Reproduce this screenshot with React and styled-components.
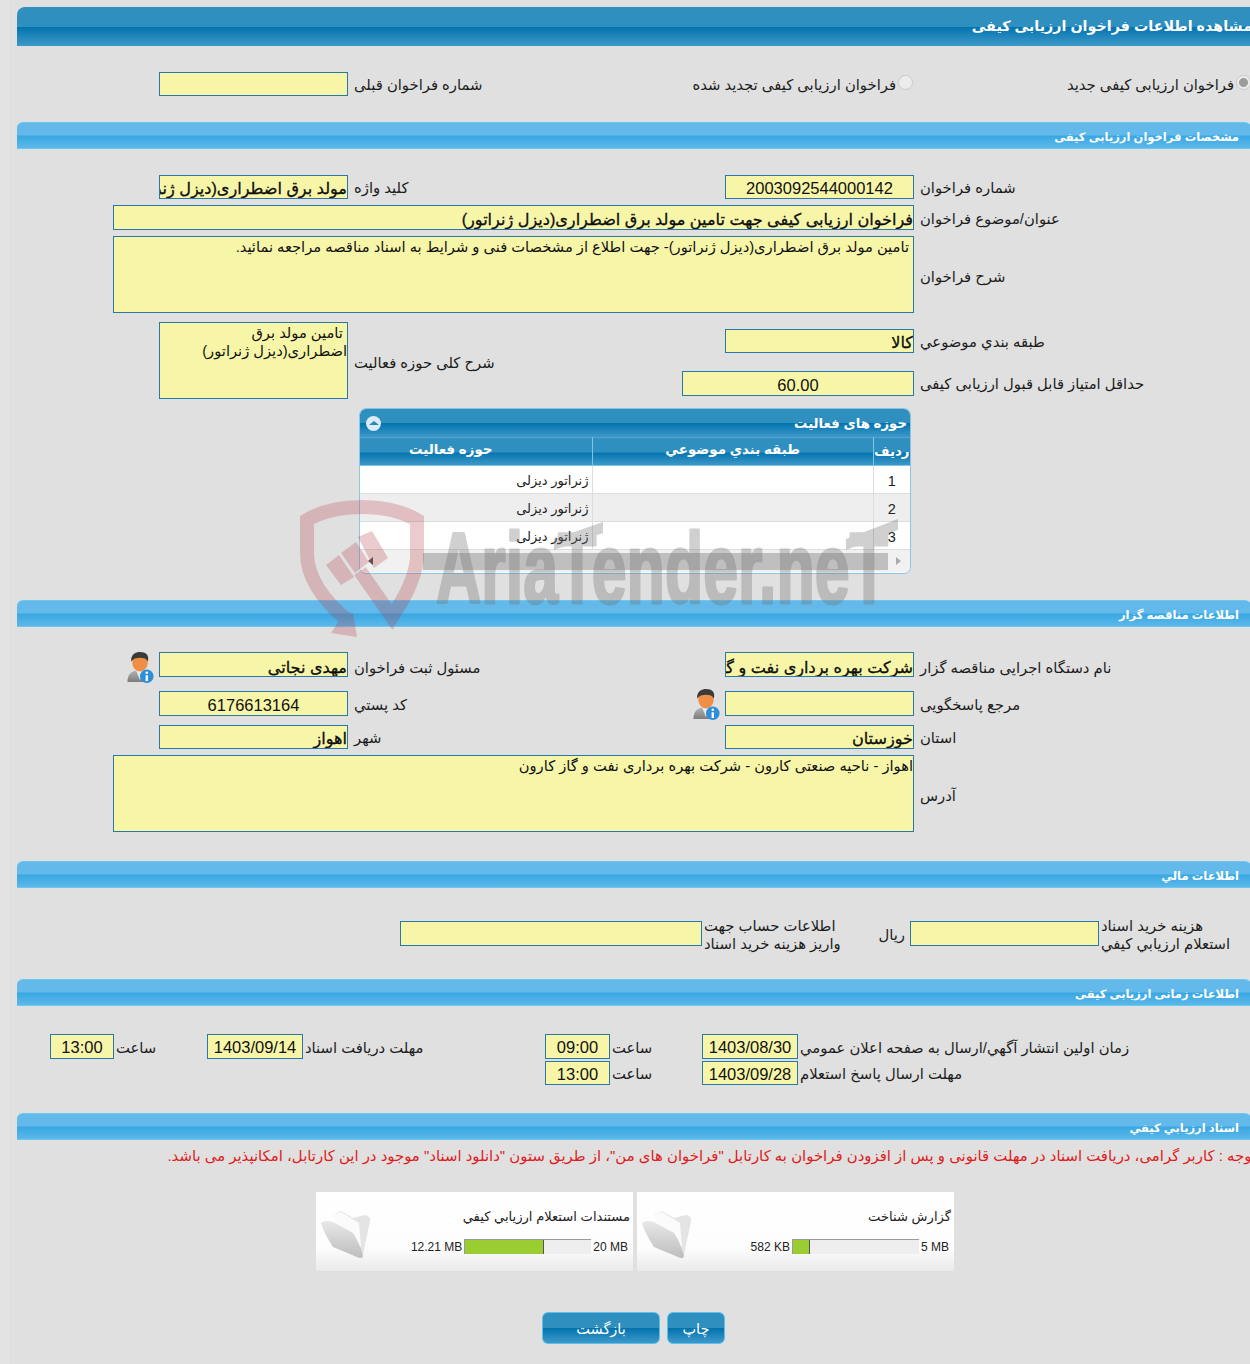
import React from "react";
import styled, { createGlobalStyle } from "styled-components";

const GlobalStyle = createGlobalStyle`
	html, body {
		margin: 0;
		padding: 0;
		height: 1364px;
		overflow: hidden;
		background: #e3e3e3;
	}
	body {
		font-family: "Liberation Sans", "DejaVu Sans", sans-serif;
		color: #1c1c1c;
	}
`;

const darkBar = "linear-gradient(to bottom, #2f90bf 0%, #2f90bf 50%, #0273ae 51%, #3f99c9 100%)";
const lightBar = "linear-gradient(to bottom, #62b9ea 0%, #62b9ea 49%, #38a7e2 51%, #5cb8ea 100%)";

const formCols = "96px 46px 189px 6px 371px 189px 6px 331px";
const moneyCols = "383px 302px 2px 177px 24px 5px 189px 2px 150px";
const timeCols = "33px 64px 2px 91px 96px 2px 240px 65px 2px 90px 96px 2px 451px";

const Page = styled.div`
	position: relative;
	width: 1241px;
	height: 1364px;
	margin-left: 10px;
	padding-left: 6px;
	padding-top: 7px;
	box-sizing: border-box;
	background: #e0e0e0;
	border-left: 1px solid #dcdcdc;
`;

const TitleBar = styled.div`
	width: 1235px;
	height: 39px;
	line-height: 39px;
	direction: rtl;
	white-space: nowrap;
	font-size: 14.3px;
	font-weight: bold;
	color: #fff;
	background: ${darkBar};
	border-top-left-radius: 8px;
`;

const SectionBar = styled.div`
	width: 1234px;
	height: 27px;
	margin-top: ${(p) => p.$mt}px;
	padding-right: 12px;
	box-sizing: border-box;
	line-height: 28px;
	direction: rtl;
	font-size: 11.5px;
	font-weight: bold;
	color: #fff;
	background: ${lightBar};
	border-top: 1px solid #6dc8f0;
	border-bottom: 1px solid #6dc8f0;
	border-radius: 6px 6px 0 0;
`;

const Row = styled.div`
	display: grid;
	grid-template-columns: ${(p) => p.$cols || formCols};
	grid-template-rows: ${(p) => p.$rows || "auto"};
	align-items: center;
	margin-top: ${(p) => p.$mt || 0}px;
`;

const fieldSize = (p) => {
	if (p.$center) return "16.5px";
	return p.$bold ? "16.1px" : "14.7px";
};

const Field = styled.div`
	grid-column: ${(p) => p.$col};
	grid-row: ${(p) => p.$row || 1};
	justify-self: end;
	width: ${(p) => p.$w}px;
	height: ${(p) => p.$h || 24}px;
	margin-top: ${(p) => p.$shift || 0}px;
	box-sizing: border-box;
	overflow: hidden;
	white-space: ${(p) => (p.$multi ? "normal" : "nowrap")};
	direction: rtl;
	text-align: ${(p) => (p.$center ? "center" : "right")};
	line-height: ${(p) => (p.$multi ? "18px" : `${(p.$h || 24) + 1 + (p.$drop || 0) * 2}px`)};
	padding-right: ${(p) => p.$pad || 0}px;
	padding-top: ${(p) => (p.$multi ? 1 : 0)}px;
	font-size: ${fieldSize};
	-webkit-text-stroke: ${(p) => (p.$bold ? "0.3px #000" : "0")};
	color: #111;
	background: #f7f6a8;
	border: 1px solid #2a78a8;
`;

const Label = styled.div`
	grid-column: ${(p) => p.$col};
	grid-row: ${(p) => p.$row || 1};
	margin-top: ${(p) => p.$shift || 0}px;
	padding-top: 2px;
	direction: rtl;
	text-align: left;
	white-space: nowrap;
	font-size: 14.8px;
	line-height: 18px;
`;

const RadioLabel = styled.label`
	grid-column: ${(p) => p.$col};
	grid-row: 1;
	justify-self: end;
	display: flex;
	align-items: center;
	gap: 2px;
	direction: rtl;
	margin-right: ${(p) => p.$right || 0}px;
	padding-top: 1px;
	font-size: 14.8px;
	white-space: nowrap;
`;

const Radio = styled.input.attrs({ type: "radio", disabled: true })`
	appearance: none;
	width: 15px;
	height: 15px;
	margin: -5px 0 0 0;
	border-radius: 50%;
	border: 1px solid #c9c9c9;
	background: ${(p) => (p.checked ? "radial-gradient(circle, #9c9c9c 0 4px, #ececec 5px)" : "#ececec")};
`;

const IconSlot = styled.div`
	grid-column: ${(p) => p.$col};
	grid-row: 1;
	justify-self: end;
	align-self: start;
	margin-right: 5px;
	margin-top: ${(p) => p.$top || 0}px;
	height: 24px;
`;

const GridWrap = styled.div`
	display: flex;
	justify-content: flex-start;
	margin: 9px 0 0 342px;
	width: 552px;
`;

const GridBox = styled.div`
	width: 552px;
	height: 166px;
	box-sizing: border-box;
	overflow: hidden;
	background: #fff;
	border: 1px solid #8cc4e8;
	border-radius: 7px;
`;

const GridCaption = styled.div`
	display: flex;
	justify-content: space-between;
	align-items: center;
	height: 28px;
	padding: 0 3px 0 6px;
	direction: rtl;
	color: #fff;
	font-size: 13.3px;
	font-weight: bold;
	background: ${darkBar};
`;

const Toggle = styled.span`
	display: flex;
	align-items: center;
	justify-content: center;
	width: 15px;
	height: 15px;
	border-radius: 50%;
	background: #dcecf6;
	&::before {
		content: "";
		border: 4px solid transparent;
		border-top: 0;
		border-bottom: 4px solid #2a86ba;
		border-left-width: 5px;
		border-right-width: 5px;
	}
`;

const Table = styled.table`
	width: 550px;
	border-collapse: collapse;
	table-layout: fixed;
	direction: rtl;
`;

const Th = styled.th`
	box-sizing: border-box;
	height: 28px;
	padding: 0 ${(p) => p.$right || 0}px ${(p) => (p.$low ? 0 : 4)}px 0;
	font-size: 13.4px;
	font-weight: bold;
	color: #fff;
	background: ${darkBar};
	border-left: 1px solid #7cc6ea;
	border-bottom: 1px solid #7cc6ea;
	border-top: 1px solid #4fa3d0;
	&:last-child {
		border-left: 0;
	}
`;

const Tr = styled.tr`
	background: ${(p) => (p.$alt ? "#eeeeee" : "#ffffff")};
`;

const Td = styled.td`
	box-sizing: border-box;
	height: 28px;
	padding: 2px 3px 0;
	font-size: ${(p) => (p.$center ? "14.5px" : "13px")};
	text-align: ${(p) => (p.$center ? "center" : "right")};
	color: #222;
	border-left: 1px solid #dddddd;
	border-bottom: 1px solid #dddddd;
	&:last-child {
		border-left: 0;
	}
`;

const ScrollTrack = styled.div`
	display: flex;
	align-items: center;
	height: 22px;
	background: #f1f1f1;
`;

const Arrow = styled.span`
	width: 0;
	height: 0;
	margin: ${(p) => p.$margin};
	border: 4px solid transparent;
	${(p) => (p.$left ? "border-right: 5px solid #555; border-left: 0;" : "border-left: 5px solid #aaa; border-right: 0;")}
`;

const ScrollThumb = styled.div`
	width: 465px;
	height: 17px;
	margin-left: 50px;
	background: #bfbfbf;
`;

const Notice = styled.div`
	width: 1239px;
	margin-top: 7px;
	direction: rtl;
	white-space: nowrap;
	font-size: 14.9px;
	line-height: 18px;
	color: #e01b1b;
`;

const Cards = styled.div`
	display: flex;
	gap: 4px;
	margin: 27px 0 0 299px;
`;

const Card = styled.div`
	display: flex;
	width: 317px;
	height: 79px;
	box-sizing: border-box;
	padding: 17px 3px 0 3px;
	background: linear-gradient(to bottom, #ffffff 0%, #fdfdfd 70%, #eaeaea 100%);
`;

const CardBody = styled.div`
	flex: 1;
	direction: rtl;
`;

const CardTitle = styled.div`
	height: 20px;
	font-size: 13.1px;
	line-height: 16px;
	color: #222;
`;

const Meter = styled.div`
	display: flex;
	justify-content: flex-start;
	align-items: center;
	direction: rtl;
	gap: 2px;
	margin: 10px 1px 0 0;
	font-size: 12px;
	color: #222;
`;

const MeterText = styled.span`
	direction: ltr;
	white-space: nowrap;
	padding-right: ${(p) => p.$pad || 0}px;
`;

const MeterTrack = styled.div`
	display: flex;
	direction: ltr;
	width: 127px;
	height: 15px;
	box-sizing: border-box;
	background: #eeeeee;
	border-top: 1px solid #999;
	border-left: 1px solid #999;
`;

const MeterFill = styled.div`
	height: 100%;
	background: #9acd32;
	border-right: 1px solid #555;
`;

const Buttons = styled.div`
	display: flex;
	gap: 7px;
	margin: 41px 0 0 525px;
`;

const Button = styled.button`
	width: ${(p) => p.$w}px;
	height: 32px;
	padding: 2px 0 0;
	font-family: inherit;
	font-size: 14.5px;
	color: #fff;
	background: ${darkBar};
	border: 1px solid #5cc0ee;
	border-radius: 6px;
`;

const Watermark = styled.svg`
	position: absolute;
	left: 273px;
	top: 495px;
	pointer-events: none;
`;

function PersonIcon() {
	return (
		<svg width="28" height="31" viewBox="0 0 28 32">
			<defs>
				<linearGradient id="suit" x1="0" y1="0" x2="0" y2="1">
					<stop offset="0" stopColor="#b4b4b4" />
					<stop offset="1" stopColor="#7c7c7c" />
				</linearGradient>
			</defs>
			<path d="M1 31 C1 23 5 20 10 19 L19 19 C23 20 25 24 25 31 Z" fill="url(#suit)" />
			<path d="M10 19 L14 29 L18 19 Z" fill="#ececec" />
			<ellipse cx="14" cy="11" rx="8" ry="9" fill="#ef8f45" />
			<path d="M5 10 C4 2 10 0 14 0 C20 0 24 3 22 10 C21 7 18 6 14 6 C10 6 7 7 5 10 Z" fill="#3a3a3a" />
			<circle cx="21" cy="25" r="7" fill="#2d8fd8" />
			<circle cx="21" cy="21.5" r="1.3" fill="#fff" />
			<rect x="19.8" y="24" width="2.4" height="6" fill="#fff" />
		</svg>
	);
}

function FolderIcon({ id }) {
	return (
		<svg width="54" height="50" viewBox="0 0 54 50">
			<defs>
				<linearGradient id={id} x1="0" y1="0" x2="0" y2="1">
					<stop offset="0" stopColor="#e8e8e8" />
					<stop offset="1" stopColor="#bdbdbd" />
				</linearGradient>
			</defs>
			<path d="M14 6 L22 2 L34 9 L46 6 C50 7 52 9 51 12 L44 46 L38 44 Z" fill="#e4e4e4" />
			<path d="M14 6 L22 3 L40 14 L42 38 L20 24 Z" fill="#fbfbfb" />
			<path d="M2 14 C6 11 10 12 14 13 L34 24 C38 30 42 38 44 47 C44 49 41 50 38 48 L14 38 C9 30 4 22 2 14 Z" fill={`url(#${id})`} />
		</svg>
	);
}

function AriaWatermark() {
	return (
		<Watermark width="640" height="150" viewBox="0 0 640 150">
			<g opacity="0.25">
				<path
					d="M64 126 C40 106 23 82 23 58 L23 25 C40 15 60 12 78 12 C96 12 116 15 133 25 L133 64 C130 88 118 106 108 122 L76 76"
					fill="none"
					stroke="#b8343f"
					strokeWidth="14"
				/>
				<g fill="#b8343f">
					<path d="M61 117 L69 118 L73 142 L47 138 Z" />
					<path d="M74 42 L88 36 L104 63 L90 73 Z" />
					<path d="M57 58 L72 47 L85 67 L71 78 Z" />
					<path d="M42 70 L55 60 L70 82 L57 90 Z" />
				</g>
			</g>
			<g fill="#6f6f6f" opacity="0.32">
				<text
					x="152"
					y="108"
					fontFamily="Liberation Sans"
					fontWeight="bold"
					fontSize="100"
					textLength="452"
					lengthAdjust="spacingAndGlyphs"
					stroke="#6f6f6f"
					strokeWidth="3"
					strokeLinejoin="round"
				>
					AriaTender.neT
				</text>
				<path d="M270 44 L319 27 L319 38 L270 55 Z" />
				<path d="M562 44 L614 24 L614 35 L562 55 Z" />
			</g>
		</Watermark>
	);
}

function Document({ id, title, used, max, percent }) {
	return (
		<Card>
			<FolderIcon id={id} />
			<CardBody>
				<CardTitle>{title}</CardTitle>
				<Meter>
					<MeterText $pad={1}>{max}</MeterText>
					<MeterTrack>
						<MeterFill style={{ width: `${percent}%` }} />
					</MeterTrack>
					<MeterText>{used}</MeterText>
				</Meter>
			</CardBody>
		</Card>
	);
}

export default function App() {
	const rows = [1, 2, 3];

	return (
		<Page>
			<GlobalStyle />
			<TitleBar>مشاهده اطلاعات فراخوان ارزیابی کیفی</TitleBar>

			<Row $mt={26}>
				<Field $col="3" $w={189} />
				<Label $col="5">شماره فراخوان قبلی</Label>
				<RadioLabel $col="5 / 7" $right={1}>
					<Radio />
					فراخوان ارزیابی کیفی تجدید شده
				</RadioLabel>
				<RadioLabel $col="8">
					<Radio checked readOnly />
					فراخوان ارزیابی کیفی جدید
				</RadioLabel>
			</Row>

			<SectionBar $mt={26}>مشخصات فراخوان ارزیابی کیفی</SectionBar>

			<Row $mt={26}>
				<Field $col="3" $w={189} $bold>مولد برق اضطراری(دیزل ژنراتور)</Field>
				<Label $col="5">کلید واژه</Label>
				<Field $col="6" $w={189} $center>2003092544000142</Field>
				<Label $col="8">شماره فراخوان</Label>
			</Row>
			<Row $mt={6}>
				<Field $col="1 / 7" $w={801} $h={25} $bold>فراخوان ارزیابی کیفی جهت تامین مولد برق اضطراری(دیزل ژنراتور)</Field>
				<Label $col="8">عنوان/موضوع فراخوان</Label>
			</Row>
			<Row $mt={6}>
				<Field $col="1 / 7" $w={801} $h={77} $multi $pad={4}>تامین مولد برق اضطراری(دیزل ژنراتور)- جهت اطلاع از مشخصات فنی و شرایط به اسناد مناقصه مراجعه نمائید.</Field>
				<Label $col="8" $shift={3}>شرح فراخوان</Label>
			</Row>
			<Row $mt={9} $rows="38px 39px">
				<Field $col="3" $row="1 / 3" $w={189} $h={77} $multi>
					{"\u00a0"}تامین مولد برق
					<br />
					اضطراری(دیزل ژنراتور)
				</Field>
				<Label $col="5" $row="1 / 3" $shift={3}>شرح کلی حوزه فعالیت</Label>
				<Field $col="6" $w={189} $bold>کالا</Field>
				<Label $col="8">طبقه بندي موضوعي</Label>
				<Field $col="6" $row={2} $w={232} $h={25} $shift={7} $center>60.00</Field>
				<Label $col="8" $row={2} $shift={7}>حداقل امتیاز قابل قبول ارزیابی کیفی</Label>
			</Row>

			<GridWrap>
				<GridBox>
					<GridCaption>
						حوزه های فعالیت
						<Toggle />
					</GridCaption>
					<Table>
						<colgroup>
							<col width="37" />
							<col width="281" />
							<col />
						</colgroup>
						<thead>
							<tr>
								<Th $low>ردیف</Th>
								<Th>طبقه بندي موضوعي</Th>
								<Th $right={50}>حوزه فعالیت</Th>
							</tr>
						</thead>
						<tbody>
							{rows.map((n) => (
								<Tr key={n} $alt={n === 2}>
									<Td $center>{n}</Td>
									<Td />
									<Td>ژنراتور دیزلی</Td>
								</Tr>
							))}
						</tbody>
					</Table>
					<ScrollTrack>
						<Arrow $left $margin="0 0 0 8px" />
						<ScrollThumb />
						<Arrow $margin="0 0 0 8px" />
					</ScrollTrack>
				</GridBox>
			</GridWrap>

			<SectionBar $mt={26}>اطلاعات مناقصه گزار</SectionBar>

			<Row $mt={25}>
				<IconSlot $col="1 / 3"><PersonIcon /></IconSlot>
				<Field $col="3" $w={189} $h={25} $bold $drop={1}>مهدی نجاتی</Field>
				<Label $col="5" $shift={4}>مسئول ثبت فراخوان</Label>
				<Field $col="6" $w={189} $h={25} $bold $drop={1}>شرکت بهره برداری نفت و گاز کارون</Field>
				<Label $col="8" $shift={4}>نام دستگاه اجرایی مناقصه گزار</Label>
			</Row>
			<Row $mt={14}>
				<Field $col="3" $w={189} $h={25} $center>6176613164</Field>
				<Label $col="5">کد پستي</Label>
				<IconSlot $col="5" $top={-2}><PersonIcon /></IconSlot>
				<Field $col="6" $w={189} $h={25} />
				<Label $col="8">مرجع پاسخگویی</Label>
			</Row>
			<Row $mt={9}>
				<Field $col="3" $w={189} $bold>اهواز</Field>
				<Label $col="5">شهر</Label>
				<Field $col="6" $w={189} $bold>خوزستان</Field>
				<Label $col="8">استان</Label>
			</Row>
			<Row $mt={6}>
				<Field $col="1 / 7" $w={801} $h={77} $multi>اهواز - ناحیه صنعتی کارون - شرکت بهره برداری نفت و گاز کارون</Field>
				<Label $col="8" $shift={3}>آدرس</Label>
			</Row>

			<SectionBar $mt={29}>اطلاعات مالي</SectionBar>

			<Row $mt={27} $cols={moneyCols}>
				<Field $col="2" $w={302} $h={25} $shift={-2} />
				<Label $col="4">
					اطلاعات حساب جهت
					<br />
					واریز هزینه خرید اسناد
				</Label>
				<Label $col="5">ریال</Label>
				<Field $col="7" $w={189} $h={25} $shift={-2} />
				<Label $col="9">
					هزینه خرید اسناد
					<br />
					استعلام ارزيابي كيفي
				</Label>
			</Row>

			<SectionBar $mt={26}>اطلاعات زمانی ارزیابی کیفی</SectionBar>

			<Row $mt={28} $cols={timeCols}>
				<Field $col="2" $w={64} $h={25} $drop={-0.5} $center>13:00</Field>
				<Label $col="4">ساعت</Label>
				<Field $col="5" $w={96} $h={25} $drop={-0.5} $center>1403/09/14</Field>
				<Label $col="7">مهلت دریافت اسناد</Label>
				<Field $col="8" $w={65} $h={25} $drop={-0.5} $center>09:00</Field>
				<Label $col="10">ساعت</Label>
				<Field $col="11" $w={96} $h={25} $drop={-0.5} $center>1403/08/30</Field>
				<Label $col="13">زمان اولین انتشار آگهي/ارسال به صفحه اعلان عمومي</Label>
			</Row>
			<Row $mt={2} $cols={timeCols}>
				<Field $col="8" $w={65} $center>13:00</Field>
				<Label $col="10">ساعت</Label>
				<Field $col="11" $w={96} $center>1403/09/28</Field>
				<Label $col="13">مهلت ارسال پاسخ استعلام</Label>
			</Row>

			<SectionBar $mt={28}>اسناد ارزيابي كيفي</SectionBar>

			<Notice>توجه : کاربر گرامی، دریافت اسناد در مهلت قانونی و پس از افزودن فراخوان به کارتابل "فراخوان های من"، از طریق ستون "دانلود اسناد" موجود در این کارتابل، امکانپذیر می باشد.</Notice>

			<Cards>
				<Document id="folderA" title="مستندات استعلام ارزيابي كيفي" used="12.21 MB" max="20 MB" percent={62} />
				<Document id="folderB" title="گزارش شناخت" used="582 KB" max="5 MB" percent={13} />
			</Cards>

			<Buttons>
				<Button $w={118}>بازگشت</Button>
				<Button $w={58}>چاپ</Button>
			</Buttons>

			<AriaWatermark />
		</Page>
	);
}
